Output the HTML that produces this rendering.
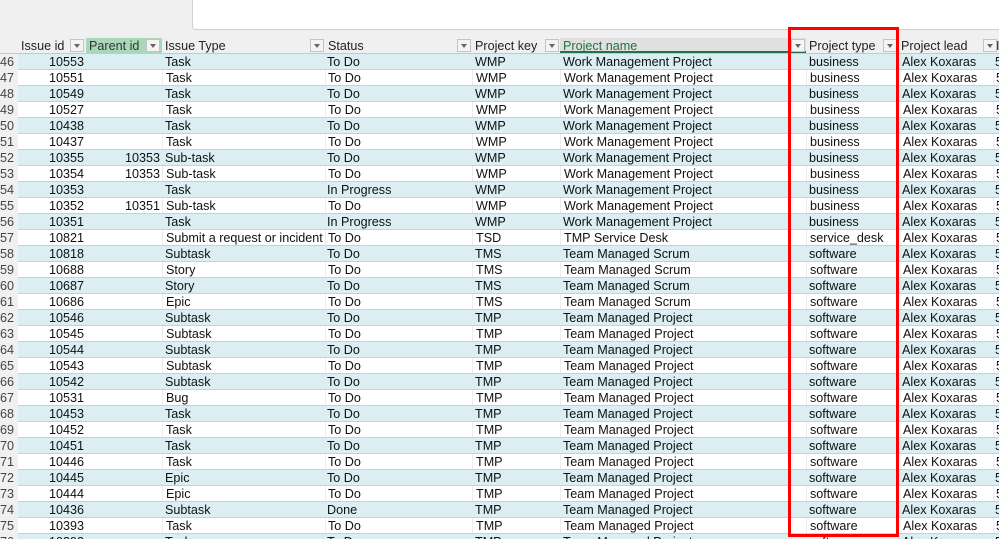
<!DOCTYPE html>
<html><head><meta charset="utf-8"><style>
*{margin:0;padding:0;box-sizing:border-box}
html,body{width:999px;height:539px;overflow:hidden}
body{background:#f0f0f0;font-family:"Liberation Sans",Arial,sans-serif;font-size:12.6px;color:#111;position:relative}
.wb{position:absolute;left:192px;top:-2px;width:820px;height:32px;background:#fff;border:1px solid #d0d0d0;border-radius:0 0 0 4px}
.hdr{position:absolute;left:0;top:37px;width:999px;height:17px;background:#f0f0f0;border-bottom:1px solid #c8c8c8}
.h{position:absolute;top:38px;height:15px;line-height:16px;padding-left:3px;color:#222}
.dd{position:absolute;top:39px;width:14px;height:13px;border:1px solid #c4c4c4;background:#f4f4f4}
.dd:after{content:"";position:absolute;left:3px;top:4px;border-left:3px solid transparent;border-right:3px solid transparent;border-top:4px solid #666}
.r{position:absolute;left:0;width:999px;height:16px;line-height:16px;border-bottom:1px solid #a8dde4}
.r.t{background:#daeef3}
.r.w{background:#fff}
.r div{position:absolute;top:0;height:15px;white-space:nowrap;overflow:hidden}
.n{left:0;width:18px;background:#f0f0f0;color:#444;padding-left:0px;height:16px!important}
.w .c{border-left:1px solid #ececec}
.a{left:18px;width:68px;text-align:right;padding-right:2px}
.b{left:86px;width:76px;text-align:right;padding-right:2px}
.c1{left:162px;width:163px;padding-left:3px}
.c2{left:325px;width:147px;padding-left:2px}
.c3{left:472px;width:88px;padding-left:3px}
.c4{left:560px;width:246px;padding-left:3px}
.c5{left:806px;width:92px;padding-left:3px}
.c6{left:898px;width:95px;padding-left:4px}
.c7{left:993px;width:10px;padding-left:2px}
.red{position:absolute;left:788px;top:27px;width:111px;height:510px;border:3px solid #f00}
</style></head><body>
<div class="wb"></div>
<div class="hdr"></div>
<div class="h" style="left:18px;width:68px">Issue id</div>
<div class="h" style="left:86px;width:76px;background:#a9d8b8;color:#333">Parent id</div>
<div class="h" style="left:162px">Issue Type</div>
<div class="h" style="left:325px">Status</div>
<div class="h" style="left:472px">Project key</div>
<div class="h" style="left:560px;width:246px;background:#e0e0e0;border-bottom:2px solid #217346;color:#217346">Project name</div>
<div class="h" style="left:806px">Project type</div>
<div class="h" style="left:898px">Project lead</div>
<div class="h" style="left:993px">I</div>
<div class="dd" style="left:70px"></div><div class="dd" style="left:146px"></div><div class="dd" style="left:310px"></div><div class="dd" style="left:457px"></div><div class="dd" style="left:545px"></div><div class="dd" style="left:791px"></div><div class="dd" style="left:883px"></div><div class="dd" style="left:983px"></div>

<div class="r t" style="top:54px"><div class="n">46</div><div class="a">10553</div><div class="b"></div><div class="c c1">Task</div><div class="c c2">To Do</div><div class="c c3">WMP</div><div class="c c4">Work Management Project</div><div class="c c5">business</div><div class="c c6">Alex Koxaras</div><div class="c c7">5</div></div>
<div class="r w" style="top:70px"><div class="n">47</div><div class="a">10551</div><div class="b"></div><div class="c c1">Task</div><div class="c c2">To Do</div><div class="c c3">WMP</div><div class="c c4">Work Management Project</div><div class="c c5">business</div><div class="c c6">Alex Koxaras</div><div class="c c7">5</div></div>
<div class="r t" style="top:86px"><div class="n">48</div><div class="a">10549</div><div class="b"></div><div class="c c1">Task</div><div class="c c2">To Do</div><div class="c c3">WMP</div><div class="c c4">Work Management Project</div><div class="c c5">business</div><div class="c c6">Alex Koxaras</div><div class="c c7">5</div></div>
<div class="r w" style="top:102px"><div class="n">49</div><div class="a">10527</div><div class="b"></div><div class="c c1">Task</div><div class="c c2">To Do</div><div class="c c3">WMP</div><div class="c c4">Work Management Project</div><div class="c c5">business</div><div class="c c6">Alex Koxaras</div><div class="c c7">5</div></div>
<div class="r t" style="top:118px"><div class="n">50</div><div class="a">10438</div><div class="b"></div><div class="c c1">Task</div><div class="c c2">To Do</div><div class="c c3">WMP</div><div class="c c4">Work Management Project</div><div class="c c5">business</div><div class="c c6">Alex Koxaras</div><div class="c c7">5</div></div>
<div class="r w" style="top:134px"><div class="n">51</div><div class="a">10437</div><div class="b"></div><div class="c c1">Task</div><div class="c c2">To Do</div><div class="c c3">WMP</div><div class="c c4">Work Management Project</div><div class="c c5">business</div><div class="c c6">Alex Koxaras</div><div class="c c7">5</div></div>
<div class="r t" style="top:150px"><div class="n">52</div><div class="a">10355</div><div class="b">10353</div><div class="c c1">Sub-task</div><div class="c c2">To Do</div><div class="c c3">WMP</div><div class="c c4">Work Management Project</div><div class="c c5">business</div><div class="c c6">Alex Koxaras</div><div class="c c7">5</div></div>
<div class="r w" style="top:166px"><div class="n">53</div><div class="a">10354</div><div class="b">10353</div><div class="c c1">Sub-task</div><div class="c c2">To Do</div><div class="c c3">WMP</div><div class="c c4">Work Management Project</div><div class="c c5">business</div><div class="c c6">Alex Koxaras</div><div class="c c7">5</div></div>
<div class="r t" style="top:182px"><div class="n">54</div><div class="a">10353</div><div class="b"></div><div class="c c1">Task</div><div class="c c2">In Progress</div><div class="c c3">WMP</div><div class="c c4">Work Management Project</div><div class="c c5">business</div><div class="c c6">Alex Koxaras</div><div class="c c7">5</div></div>
<div class="r w" style="top:198px"><div class="n">55</div><div class="a">10352</div><div class="b">10351</div><div class="c c1">Sub-task</div><div class="c c2">To Do</div><div class="c c3">WMP</div><div class="c c4">Work Management Project</div><div class="c c5">business</div><div class="c c6">Alex Koxaras</div><div class="c c7">5</div></div>
<div class="r t" style="top:214px"><div class="n">56</div><div class="a">10351</div><div class="b"></div><div class="c c1">Task</div><div class="c c2">In Progress</div><div class="c c3">WMP</div><div class="c c4">Work Management Project</div><div class="c c5">business</div><div class="c c6">Alex Koxaras</div><div class="c c7">5</div></div>
<div class="r w" style="top:230px"><div class="n">57</div><div class="a">10821</div><div class="b"></div><div class="c c1">Submit a request or incident</div><div class="c c2">To Do</div><div class="c c3">TSD</div><div class="c c4">TMP Service Desk</div><div class="c c5">service_desk</div><div class="c c6">Alex Koxaras</div><div class="c c7">5</div></div>
<div class="r t" style="top:246px"><div class="n">58</div><div class="a">10818</div><div class="b"></div><div class="c c1">Subtask</div><div class="c c2">To Do</div><div class="c c3">TMS</div><div class="c c4">Team Managed Scrum</div><div class="c c5">software</div><div class="c c6">Alex Koxaras</div><div class="c c7">5</div></div>
<div class="r w" style="top:262px"><div class="n">59</div><div class="a">10688</div><div class="b"></div><div class="c c1">Story</div><div class="c c2">To Do</div><div class="c c3">TMS</div><div class="c c4">Team Managed Scrum</div><div class="c c5">software</div><div class="c c6">Alex Koxaras</div><div class="c c7">5</div></div>
<div class="r t" style="top:278px"><div class="n">60</div><div class="a">10687</div><div class="b"></div><div class="c c1">Story</div><div class="c c2">To Do</div><div class="c c3">TMS</div><div class="c c4">Team Managed Scrum</div><div class="c c5">software</div><div class="c c6">Alex Koxaras</div><div class="c c7">5</div></div>
<div class="r w" style="top:294px"><div class="n">61</div><div class="a">10686</div><div class="b"></div><div class="c c1">Epic</div><div class="c c2">To Do</div><div class="c c3">TMS</div><div class="c c4">Team Managed Scrum</div><div class="c c5">software</div><div class="c c6">Alex Koxaras</div><div class="c c7">5</div></div>
<div class="r t" style="top:310px"><div class="n">62</div><div class="a">10546</div><div class="b"></div><div class="c c1">Subtask</div><div class="c c2">To Do</div><div class="c c3">TMP</div><div class="c c4">Team Managed Project</div><div class="c c5">software</div><div class="c c6">Alex Koxaras</div><div class="c c7">5</div></div>
<div class="r w" style="top:326px"><div class="n">63</div><div class="a">10545</div><div class="b"></div><div class="c c1">Subtask</div><div class="c c2">To Do</div><div class="c c3">TMP</div><div class="c c4">Team Managed Project</div><div class="c c5">software</div><div class="c c6">Alex Koxaras</div><div class="c c7">5</div></div>
<div class="r t" style="top:342px"><div class="n">64</div><div class="a">10544</div><div class="b"></div><div class="c c1">Subtask</div><div class="c c2">To Do</div><div class="c c3">TMP</div><div class="c c4">Team Managed Project</div><div class="c c5">software</div><div class="c c6">Alex Koxaras</div><div class="c c7">5</div></div>
<div class="r w" style="top:358px"><div class="n">65</div><div class="a">10543</div><div class="b"></div><div class="c c1">Subtask</div><div class="c c2">To Do</div><div class="c c3">TMP</div><div class="c c4">Team Managed Project</div><div class="c c5">software</div><div class="c c6">Alex Koxaras</div><div class="c c7">5</div></div>
<div class="r t" style="top:374px"><div class="n">66</div><div class="a">10542</div><div class="b"></div><div class="c c1">Subtask</div><div class="c c2">To Do</div><div class="c c3">TMP</div><div class="c c4">Team Managed Project</div><div class="c c5">software</div><div class="c c6">Alex Koxaras</div><div class="c c7">5</div></div>
<div class="r w" style="top:390px"><div class="n">67</div><div class="a">10531</div><div class="b"></div><div class="c c1">Bug</div><div class="c c2">To Do</div><div class="c c3">TMP</div><div class="c c4">Team Managed Project</div><div class="c c5">software</div><div class="c c6">Alex Koxaras</div><div class="c c7">5</div></div>
<div class="r t" style="top:406px"><div class="n">68</div><div class="a">10453</div><div class="b"></div><div class="c c1">Task</div><div class="c c2">To Do</div><div class="c c3">TMP</div><div class="c c4">Team Managed Project</div><div class="c c5">software</div><div class="c c6">Alex Koxaras</div><div class="c c7">5</div></div>
<div class="r w" style="top:422px"><div class="n">69</div><div class="a">10452</div><div class="b"></div><div class="c c1">Task</div><div class="c c2">To Do</div><div class="c c3">TMP</div><div class="c c4">Team Managed Project</div><div class="c c5">software</div><div class="c c6">Alex Koxaras</div><div class="c c7">5</div></div>
<div class="r t" style="top:438px"><div class="n">70</div><div class="a">10451</div><div class="b"></div><div class="c c1">Task</div><div class="c c2">To Do</div><div class="c c3">TMP</div><div class="c c4">Team Managed Project</div><div class="c c5">software</div><div class="c c6">Alex Koxaras</div><div class="c c7">5</div></div>
<div class="r w" style="top:454px"><div class="n">71</div><div class="a">10446</div><div class="b"></div><div class="c c1">Task</div><div class="c c2">To Do</div><div class="c c3">TMP</div><div class="c c4">Team Managed Project</div><div class="c c5">software</div><div class="c c6">Alex Koxaras</div><div class="c c7">5</div></div>
<div class="r t" style="top:470px"><div class="n">72</div><div class="a">10445</div><div class="b"></div><div class="c c1">Epic</div><div class="c c2">To Do</div><div class="c c3">TMP</div><div class="c c4">Team Managed Project</div><div class="c c5">software</div><div class="c c6">Alex Koxaras</div><div class="c c7">5</div></div>
<div class="r w" style="top:486px"><div class="n">73</div><div class="a">10444</div><div class="b"></div><div class="c c1">Epic</div><div class="c c2">To Do</div><div class="c c3">TMP</div><div class="c c4">Team Managed Project</div><div class="c c5">software</div><div class="c c6">Alex Koxaras</div><div class="c c7">5</div></div>
<div class="r t" style="top:502px"><div class="n">74</div><div class="a">10436</div><div class="b"></div><div class="c c1">Subtask</div><div class="c c2">Done</div><div class="c c3">TMP</div><div class="c c4">Team Managed Project</div><div class="c c5">software</div><div class="c c6">Alex Koxaras</div><div class="c c7">5</div></div>
<div class="r w" style="top:518px"><div class="n">75</div><div class="a">10393</div><div class="b"></div><div class="c c1">Task</div><div class="c c2">To Do</div><div class="c c3">TMP</div><div class="c c4">Team Managed Project</div><div class="c c5">software</div><div class="c c6">Alex Koxaras</div><div class="c c7">5</div></div>
<div class="r t" style="top:534px"><div class="n">76</div><div class="a">10392</div><div class="b"></div><div class="c c1">Task</div><div class="c c2">To Do</div><div class="c c3">TMP</div><div class="c c4">Team Managed Project</div><div class="c c5">software</div><div class="c c6">Alex Koxaras</div><div class="c c7">5</div></div>
<div class="red"></div>
</body></html>
